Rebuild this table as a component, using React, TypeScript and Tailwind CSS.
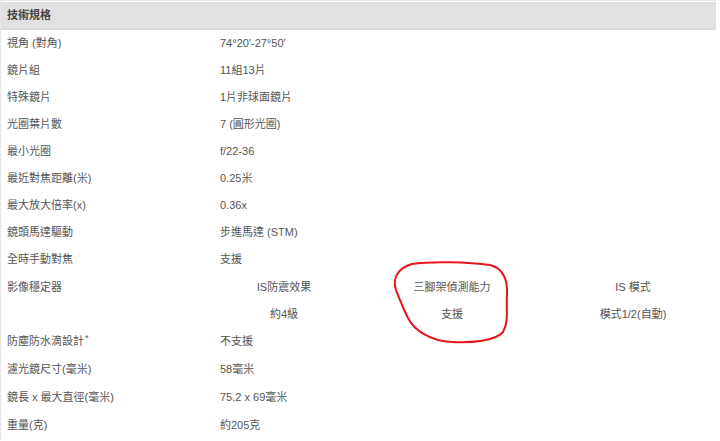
import React from "react";

const rows1: [string, string][] = [
  ["視角 (對角)", "74°20'-27°50'"],
  ["鏡片組", "11組13片"],
  ["特殊鏡片", "1片非球面鏡片"],
  ["光圈葉片數", "7 (圓形光圈)"],
  ["最小光圈", "f/22-36"],
  ["最近對焦距離(米)", "0.25米"],
  ["最大放大倍率(x)", "0.36x"],
  ["鏡頭馬達驅動", "步進馬達 (STM)"],
  ["全時手動對焦", "支援"],
];

const rows2: [React.ReactNode, string][] = [
  [
    <>
      防塵防水滴設計<span className="text-[9px] relative -top-[4px] ml-[1px]">*</span>
    </>,
    "不支援",
  ],
  ["濾光鏡尺寸(毫米)", "58毫米"],
  ["鏡長 x 最大直徑(毫米)", "75.2 x 69毫米"],
  ["重量(克)", "約205克"],
];

function Row({ label, value, tall }: { label: React.ReactNode; value: string; tall?: boolean }) {
  return (
    <div className={tall ? "flex h-[28px] items-center" : "flex h-[27px] items-center"}>
      <div className="w-[213px] pl-[6px]">{label}</div>
      <div className="pl-[6px]">{value}</div>
    </div>
  );
}

export default function App() {
  return (
    <div
      className="relative w-[720px] h-[441px] bg-white text-[11px] text-[#555] overflow-hidden"
      style={{ fontFamily: '"Liberation Sans", "Noto Sans CJK TC", sans-serif' }}
    >
      <div className="w-[716px] border-l border-t border-[#e6e6e6] pt-[1px]">
        <div className="h-[28px] bg-[#e1e1e1] flex items-center pl-[6px] text-[#444] font-bold border-b border-[#d8d8d8]">
          技術規格
        </div>
        {rows1.map(([l, v]) => (
          <Row key={l} label={l} value={v} />
        ))}
        <div className="flex">
          <div className="w-[213px] pl-[6px] h-[28px] flex items-center">影像穩定器</div>
          <div className="flex-1 grid grid-cols-[140px_196px_1fr] text-center">
            <div className="h-[28px] flex items-center justify-center">IS防震效果</div>
            <div className="h-[28px] flex items-center justify-center">三腳架偵測能力</div>
            <div className="h-[28px] flex items-center justify-center">IS 模式</div>
            <div className="h-[26px] flex items-center justify-center">約4級</div>
            <div className="h-[26px] flex items-center justify-center">支援</div>
            <div className="h-[26px] flex items-center justify-center">模式1/2(自動)</div>
          </div>
        </div>
        {rows2.map(([l, v], i) => (
          <Row key={i} label={l} value={v} tall />
        ))}
      </div>
      <svg
        className="absolute left-0 top-0 pointer-events-none"
        width="720"
        height="441"
        viewBox="0 0 720 441"
      >
        <path
          d="M396 290 C392 278 398 268 412 264 C430 261 470 262 490 265 C503 268 508 280 507 295 C506 308 509 322 503 332 C495 341 472 343 452 342 C430 341 414 330 408 318 C403 308 400 300 396 290 Z"
          fill="none"
          stroke="#e8141c"
          strokeWidth="2"
          strokeLinejoin="round"
        />
      </svg>
    </div>
  );
}
